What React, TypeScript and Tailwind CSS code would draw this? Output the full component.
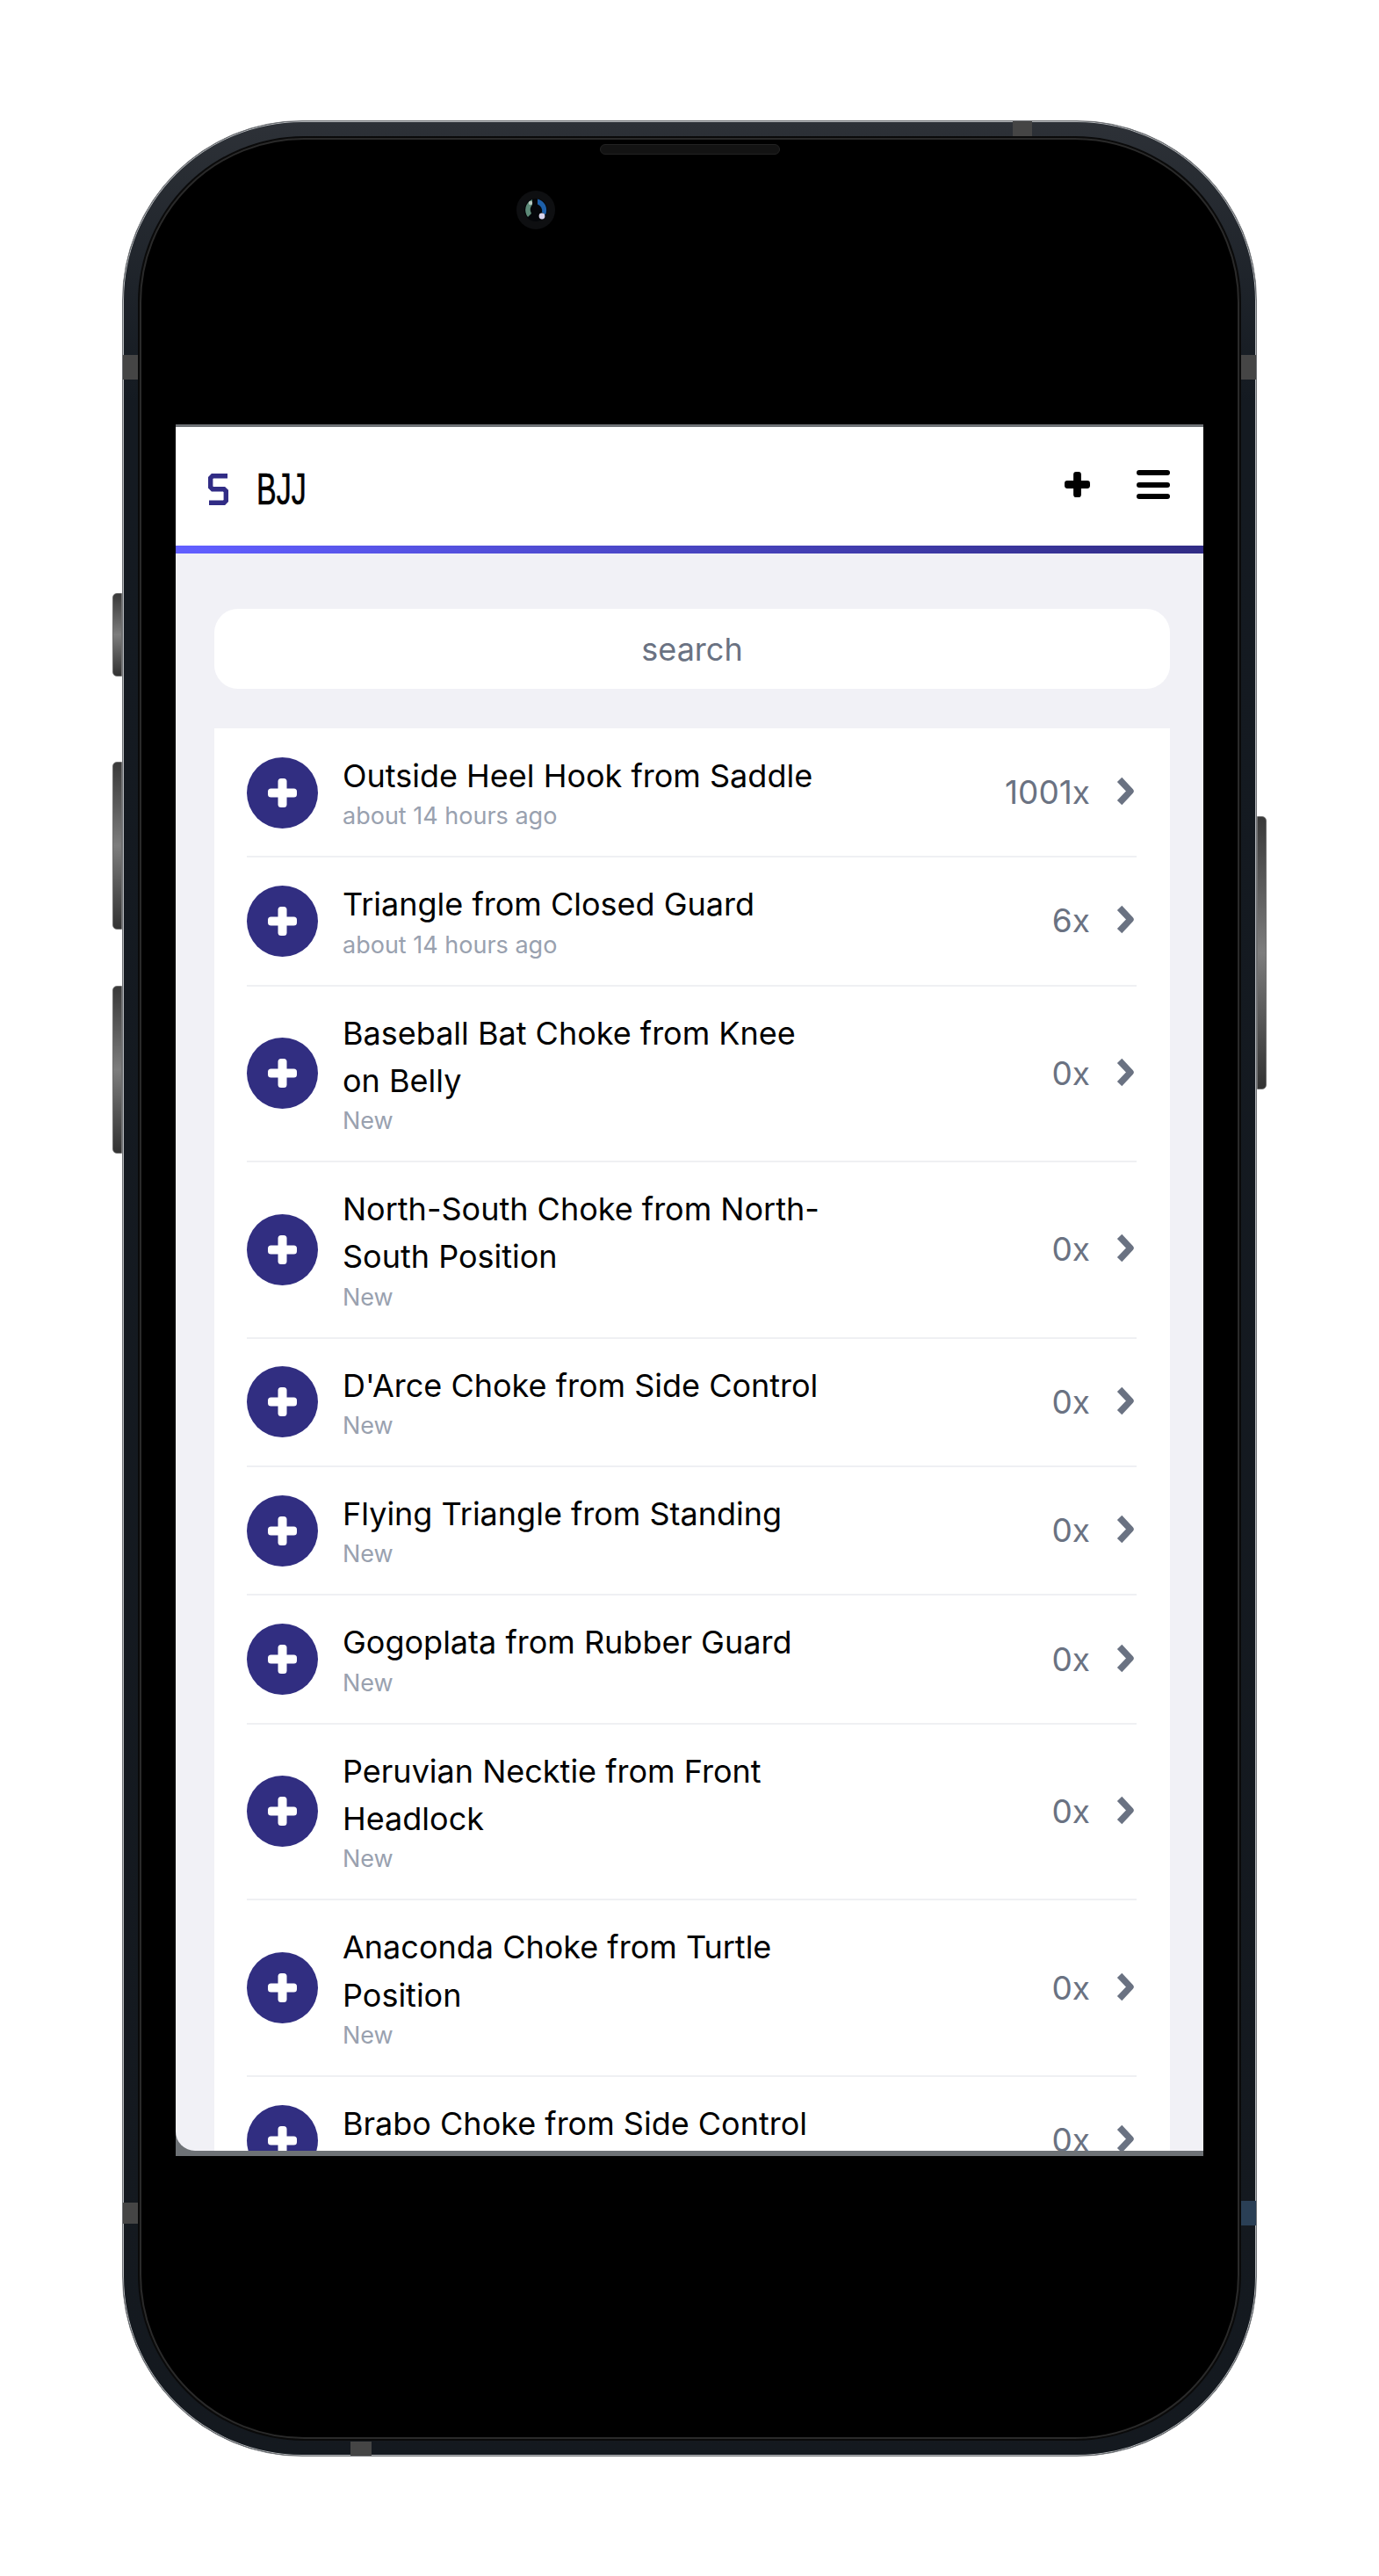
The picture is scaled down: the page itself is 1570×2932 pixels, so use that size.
import React from 'react';

interface Technique {
    title: string;
    subtitle: string;
    count: string;
}

const techniques: Technique[] = [
    { title: 'Outside Heel Hook from Saddle', subtitle: 'about 14 hours ago', count: '1001x' },
    { title: 'Triangle from Closed Guard', subtitle: 'about 14 hours ago', count: '6x' },
    { title: 'Baseball Bat Choke from Knee on Belly', subtitle: 'New', count: '0x' },
    { title: 'North-South Choke from North-South Position', subtitle: 'New', count: '0x' },
    { title: "D'Arce Choke from Side Control", subtitle: 'New', count: '0x' },
    { title: 'Flying Triangle from Standing', subtitle: 'New', count: '0x' },
    { title: 'Gogoplata from Rubber Guard', subtitle: 'New', count: '0x' },
    { title: 'Peruvian Necktie from Front Headlock', subtitle: 'New', count: '0x' },
    { title: 'Anaconda Choke from Turtle Position', subtitle: 'New', count: '0x' },
    { title: 'Brabo Choke from Side Control', subtitle: 'New', count: '0x' },
];

const PlusIcon: React.FC<{ className: string }> = ({ className }) => (
    <svg viewBox="0 0 33 33" className={className} fill="currentColor">
        <rect x="11.5" y="0" width="10" height="33" rx="3.5" />
        <rect x="0" y="11.5" width="33" height="10" rx="3.5" />
    </svg>
);

const Chevron: React.FC = () => (
    <svg viewBox="0 0 21 33" className="w-[21px] h-[33px] mr-[2px] -mt-[3px]">
        <path
            d="M3.6 3.4L16 16.5L3.6 29.6"
            fill="none"
            stroke="currentColor"
            strokeWidth="7.4"
            strokeLinejoin="round"
        />
    </svg>
);

const Logo: React.FC = () => (
    <svg viewBox="0 0 23 36" className="w-[23px] h-[36px] text-indigo-900">
        <path
            d="M22 2.7H5L2.7 5V15.5L5 17.8H18L20.3 20V31L18 33.3H1"
            fill="none"
            stroke="currentColor"
            strokeWidth="5.4"
        />
    </svg>
);

const Camera: React.FC = () => (
    <svg viewBox="0 0 44 44" className="w-[44px] h-[44px]">
        <circle cx="22" cy="22" r="22" fill="#0e0f11" />
        <circle cx="22" cy="22" r="13" fill="#05070a" />
        <path d="M24 9.5a13 13 0 0 1 9 18l-4-3a8 8 0 0 0-5-9z" fill="#1d5fa8" />
        <path d="M18 10a13 13 0 0 0-5 20l4-4a8 8 0 0 1 1-10z" fill="#5d8a78" />
        <circle cx="29" cy="29" r="3.4" fill="#d8d4ec" />
        <circle cx="16" cy="14" r="2.2" fill="#b8c8c0" />
    </svg>
);

const SideButton: React.FC<{ className: string }> = ({ className }) => (
    <div className={`absolute w-[11px] border border-[#6f6f6f] bg-linear-to-b from-[#3a3a3a] via-[#7d7d7d] to-[#333333] ${className}`} />
);

const Row: React.FC<{ item: Technique }> = ({ item }) => (
    <div className="flex items-center border-b-2 border-[#eff0f3] py-[26px]">
        <div className="flex items-center justify-center w-[81px] h-[81px] shrink-0 rounded-full bg-[#312e81] text-white">
            <PlusIcon className="w-[33px] h-[33px]" />
        </div>
        <div className="ml-[28px] w-[560px]">
            <p className="text-[36px] leading-[54.3px] text-black">{item.title}</p>
            <p className="text-[27px] leading-[38px] text-gray-400">{item.subtitle}</p>
        </div>
        <div className="ml-auto flex items-center gap-[30px] text-gray-500">
            <span className="text-[37px] leading-[54px]">{item.count}</span>
            <Chevron />
        </div>
    </div>
);

const App: React.FC = () => {
    return (
        <div className="w-[1570px] h-[2932px] bg-white pt-[137px] pl-[139px] overflow-hidden font-['Inter',sans-serif]">
            {/* Phone body */}
            <div className="relative w-[1292px] h-[2659px] rounded-[205px] border border-[#6f7276] shadow-[inset_0_0_0_1px_#b5b8bb] bg-linear-to-b from-[#2d3137] via-[#141a21] via-[12%] to-[#14191f] p-[19px]">
                <SideButton className="-left-[12px] top-[537px] h-[95px] rounded-l-[5px]" />
                <SideButton className="-left-[12px] top-[729px] h-[191px] rounded-l-[5px]" />
                <SideButton className="-left-[12px] top-[984px] h-[191px] rounded-l-[5px]" />
                <SideButton className="-right-[12px] top-[791px] h-[311px] rounded-r-[5px]" />

                {/* Antenna lines */}
                <div className="absolute left-0 top-[266px] w-[18px] h-[28px] bg-[#454545]" />
                <div className="absolute right-0 top-[266px] w-[18px] h-[28px] bg-[#454545]" />
                <div className="absolute left-0 top-[2369px] w-[18px] h-[24px] bg-[#454545]" />
                <div className="absolute right-0 top-[2367px] w-[18px] h-[28px] bg-[#2a3f55]" />
                <div className="absolute left-[1013px] top-0 w-[22px] h-[18px] bg-[#454545]" />
                <div className="absolute left-[259px] bottom-0 w-[24px] h-[16px] bg-[#454545]" />

                {/* Black glass */}
                <div className="relative h-full rounded-[187px] bg-black border-2 border-[#2a2a2a] shadow-[0_0_0_2px_#0a0a0a] pt-[324px] px-[39px]">
                    <div className="absolute left-[522px] top-[5px] w-[205px] h-[12px] rounded-full bg-[#131313] border border-[#222222]" />
                    <div className="absolute left-[427px] top-[58px]">
                        <Camera />
                    </div>

                    {/* Screen */}
                    <div className="h-[1971px] bg-[#6e7276] pt-[3px] pb-[6px]">
                        <div className="flex flex-col h-full overflow-hidden rounded-bl-[22px] bg-[#f1f1f6]">
                            {/* Header */}
                            <header className="flex items-center shrink-0 h-[135px] bg-white pl-[37px] pr-[38px] pb-[4px]">
                                <div className="flex items-center mt-[10px]">
                                    <Logo />
                                    <span className="ml-[32px] text-[50px] leading-none text-black origin-left scale-x-[0.68] [-webkit-text-stroke:0.6px_black] font-['Liberation_Sans_Narrow','Liberation_Sans',sans-serif]">BJJ</span>
                                </div>
                                <PlusIcon className="ml-auto w-[29px] h-[29px] text-black" />
                                <div className="ml-[53px] flex flex-col justify-between w-[38px] h-[33px]">
                                    <div className="h-[6px] rounded-full bg-black" />
                                    <div className="h-[6px] rounded-full bg-black" />
                                    <div className="h-[6px] rounded-full bg-black" />
                                </div>
                            </header>
                            <div className="shrink-0 h-[9px] bg-linear-to-r from-indigo-500 to-indigo-900" />

                            <div className="flex-1 pl-[44px] pr-[38px] pt-[63px]">
                                {/* Search */}
                                <div className="flex items-center justify-center h-[91px] rounded-[27px] bg-white text-[36px] text-gray-500">
                                    search
                                </div>

                                {/* Technique list */}
                                <div className="mt-[45px] bg-white pt-[1px] pl-[37px] pr-[38px]">
                                    {techniques.map((item) => (
                                        <Row key={item.title} item={item} />
                                    ))}
                                </div>
                            </div>
                        </div>
                    </div>
                </div>
            </div>
        </div>
    );
};

export default App;
